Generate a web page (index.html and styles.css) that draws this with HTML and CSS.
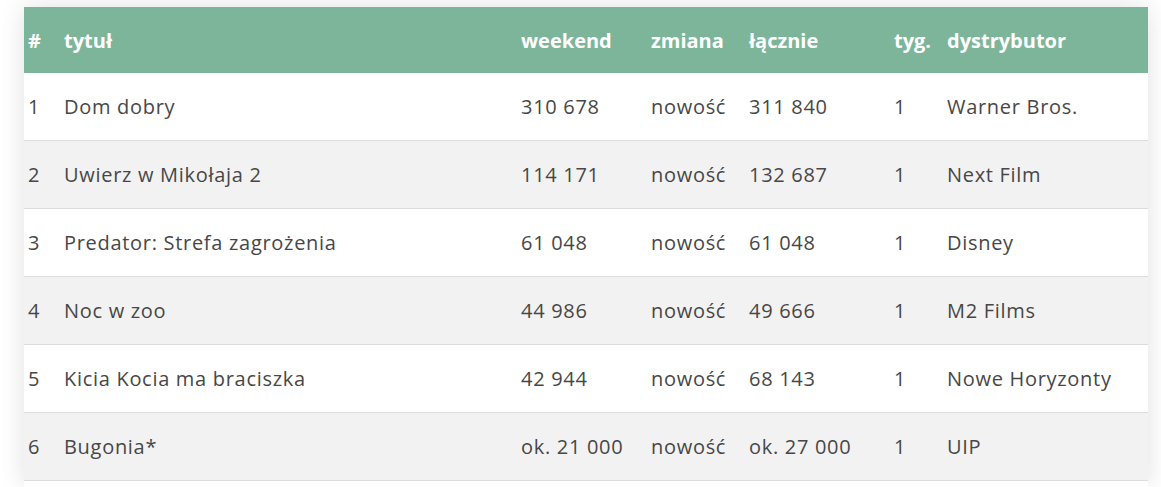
FILE: index.html
```html
<!DOCTYPE html>
<html lang="pl">
<head>
<meta charset="utf-8">
<title>Box office</title>
<link rel="stylesheet" href="styles.css">
</head>
<body>
<div class="wrap">
<div class="card">
<table class="bo">
  <colgroup>
    <col class="c-rank"><col class="c-title"><col class="c-weekend"><col class="c-change"><col class="c-total"><col class="c-weeks"><col class="c-dist">
  </colgroup>
  <thead>
    <tr><th>#</th><th>tytuł</th><th>weekend</th><th>zmiana</th><th>łącznie</th><th>tyg.</th><th>dystrybutor</th></tr>
  </thead>
  <tbody>
    <tr><td>1</td><td>Dom dobry</td><td>310 678</td><td>nowość</td><td>311 840</td><td>1</td><td>Warner Bros.</td></tr>
    <tr><td>2</td><td>Uwierz w Mikołaja 2</td><td>114 171</td><td>nowość</td><td>132 687</td><td>1</td><td>Next Film</td></tr>
    <tr><td>3</td><td>Predator: Strefa zagrożenia</td><td>61 048</td><td>nowość</td><td>61 048</td><td>1</td><td>Disney</td></tr>
    <tr><td>4</td><td>Noc w zoo</td><td>44 986</td><td>nowość</td><td>49 666</td><td>1</td><td>M2 Films</td></tr>
    <tr><td>5</td><td>Kicia Kocia ma braciszka</td><td>42 944</td><td>nowość</td><td>68 143</td><td>1</td><td>Nowe Horyzonty</td></tr>
    <tr><td>6</td><td>Bugonia*</td><td>ok. 21 000</td><td>nowość</td><td>ok. 27 000</td><td>1</td><td>UIP</td></tr>
  </tbody>
</table>
</div>
</div>
</body>
</html>
```
FILE: styles.css
```css
html, body {
  margin: 0;
  padding: 0;
  background: #ffffff;
}
body {
  font-family: "Open Sans", "Noto Sans", sans-serif;
  color: #474747;
}
.wrap {
  padding: 7px 13px 0 24px;
}
.card {
  width: 1124px;
  background: #fff;
  box-shadow: 0 0 24px rgba(0, 0, 0, 0.12);
  padding-bottom: 6px;
}
.bo {
  width: 1124px;
  border-collapse: collapse;
  table-layout: fixed;
  font-size: 20px;
}
.c-rank { width: 36px; }
.c-title { width: 457px; }
.c-weekend { width: 130px; }
.c-change { width: 98px; }
.c-total { width: 145px; }
.c-weeks { width: 53px; }
.c-dist { width: 205px; }
.bo th {
  background: #7db59a;
  color: #fff;
  font-weight: 700;
  text-align: left;
  height: 66px;
  padding: 0 0 0 4px;
  white-space: nowrap;
}
.bo td {
  height: 67px;
  padding: 0 0 0 4px;
  border-bottom: 1px solid #dcdcdc;
  white-space: nowrap;
  letter-spacing: 0.7px;
}
.bo tbody tr:nth-child(even) td {
  background: #f2f2f2;
}
```
